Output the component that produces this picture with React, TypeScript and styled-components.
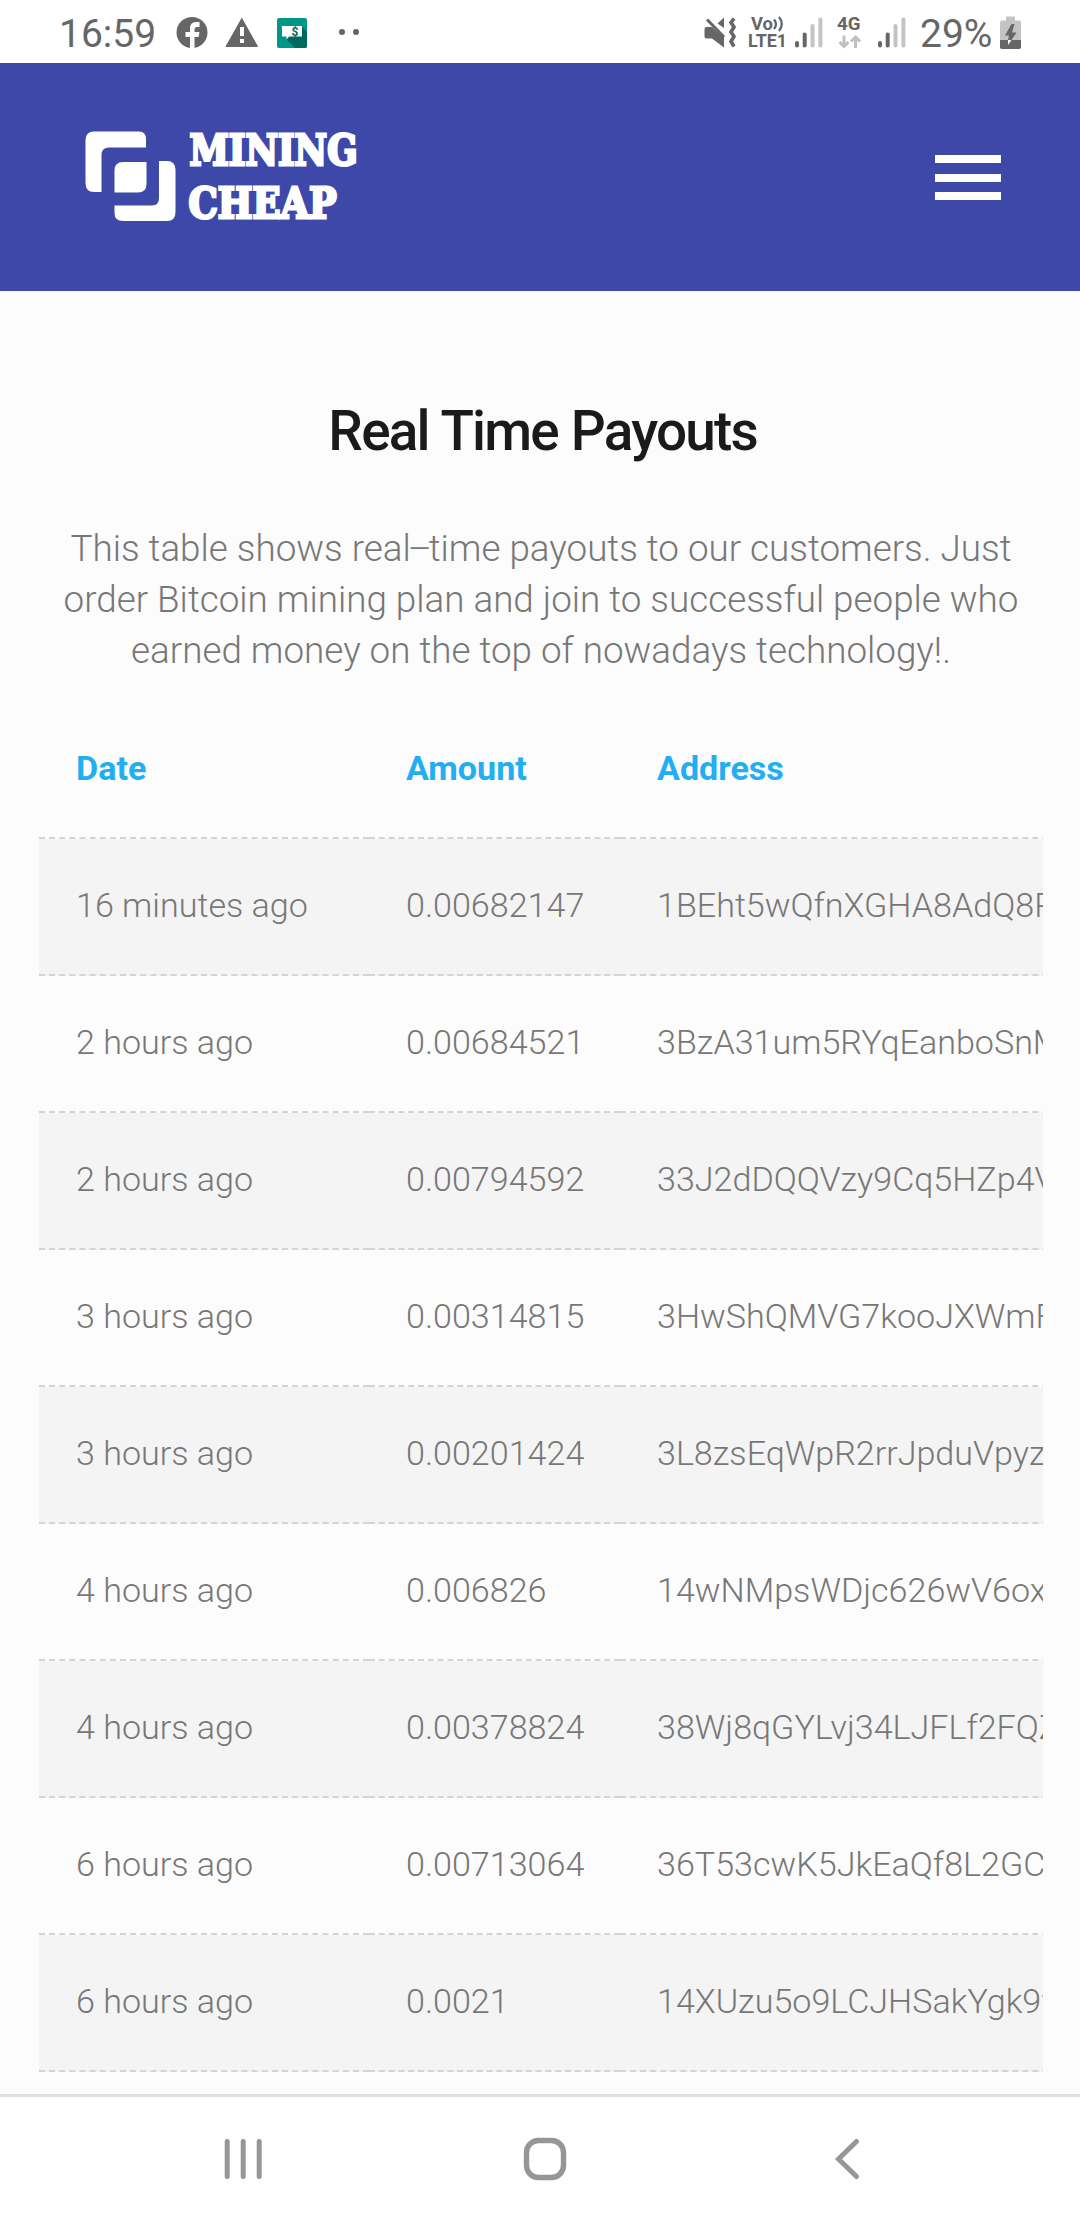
import React from "react";
import styled, { createGlobalStyle } from "styled-components";

const GlobalStyle = createGlobalStyle`
  * { box-sizing: border-box; }
  body { margin: 0; background: #fcfcfc; font-family: Roboto, "Liberation Sans", sans-serif; }
`;

const Screen = styled.div`
  width: 1080px;
  height: 2220px;
  display: flex;
  flex-direction: column;
  overflow: hidden;
  background: #fcfcfc;
`;

const StatusBar = styled.div`
  flex: none;
  height: 63px;
  padding: 0 59px 0 59px;
  display: flex;
  justify-content: space-between;
  align-items: flex-start;
  background: #fff;
  color: #666;
`;

const StatusGroup = styled.div`
  display: flex;
  align-items: flex-start;
  height: 63px;
`;

const Glyph = styled.svg<{ $gap?: number }>`
  display: block;
  flex: none;
  margin-left: ${(p) => p.$gap ?? 0}px;
`;

const StatusText = styled.span<{ $width: number; $gap?: number }>`
  flex: none;
  width: ${(p) => p.$width}px;
  margin-left: ${(p) => p.$gap ?? 0}px;
  font-size: 39px;
  line-height: 69px;
  white-space: nowrap;
`;

const Header = styled.header`
  flex: none;
  height: 228px;
  padding: 0 79px 0 85px;
  display: flex;
  justify-content: space-between;
  align-items: center;
  background: #3d48a9;
`;

const MenuButton = styled.button`
  width: 66px;
  height: 45px;
  margin-top: 1px;
  padding: 0;
  border: 0;
  background: none;
  display: flex;
  flex-direction: column;
  justify-content: space-between;
`;

const MenuBar = styled.span`
  height: 8px;
  background: #fff;
`;

const Content = styled.main`
  flex: 1;
  min-height: 0;
  overflow: hidden;
  padding: 98px 37px 0 39px;
`;

const Title = styled.h1`
  margin: 0;
  height: 84px;
  padding-left: 3px;
  font-size: 56px;
  font-weight: 500;
  line-height: 84px;
  letter-spacing: -1.8px;
  word-spacing: 1px;
  text-align: center;
  color: #1a1a1c;
  white-space: nowrap;
`;

const TitleText = styled.span`
  display: inline-block;
  transform: scaleX(0.98);
`;

const Intro = styled.p`
  margin: 50px 0 0;
  font-size: 36.8px;
  font-weight: 300;
  line-height: 51px;
  text-align: center;
  color: #777;
  white-space: nowrap;
`;

const Dash = styled.span`
  margin: 0 -3px;
`;

const TableWrap = styled.div`
  margin-top: 26px;
  overflow: hidden;
`;

const Row = styled.div<{ $shade?: boolean }>`
  width: 1100px;
  display: grid;
  grid-template-columns: 330px 251px 519px;
  background: ${(p) => (p.$shade ? "#f4f4f4" : "transparent")};
`;

const Cell = styled.div<{ $head?: boolean }>`
  height: 137px;
  padding-left: 37px;
  border-bottom: 2px dashed #d4d4d4;
  font-size: 34.1px;
  line-height: 132px;
  font-weight: ${(p) => (p.$head ? 700 : 300)};
  color: ${(p) => (p.$head ? "#22aef3" : "#777")};
  white-space: nowrap;
`;

const NavBar = styled.nav`
  flex: none;
  height: 126px;
  border-top: 3px solid #dfdfdf;
  padding: 0 218px 0 222px;
  display: flex;
  justify-content: space-between;
  align-items: center;
  background: #fff;
`;

const rows: [string, string, string][] = [
  ["16 minutes ago", "0.00682147", "1BEht5wQfnXGHA8AdQ8P"],
  ["2 hours ago", "0.00684521", "3BzA31um5RYqEanboSnM"],
  ["2 hours ago", "0.00794592", "33J2dDQQVzy9Cq5HZp4V"],
  ["3 hours ago", "0.00314815", "3HwShQMVG7kooJXWmF"],
  ["3 hours ago", "0.00201424", "3L8zsEqWpR2rrJpduVpyz"],
  ["4 hours ago", "0.006826", "14wNMpsWDjc626wV6ox"],
  ["4 hours ago", "0.00378824", "38Wj8qGYLvj34LJFLf2FQZ"],
  ["6 hours ago", "0.00713064", "36T53cwK5JkEaQf8L2GC"],
  ["6 hours ago", "0.0021", "14XUzu5o9LCJHSakYgk9f"],
];

const Signal = ({ gap }: { gap: number }) => (
  <Glyph $gap={gap} width="28" height="63" viewBox="0 0 28 63">
    <rect x="0" y="41" width="4" height="6.5" rx="2" fill="#666" />
    <rect x="7.7" y="32.5" width="4" height="15" rx="2" fill="#666" />
    <rect x="15.5" y="24" width="4" height="23.5" rx="2" fill="#c3c3c3" />
    <rect x="23.4" y="17.5" width="4" height="30" rx="2" fill="#c3c3c3" />
  </Glyph>
);

const Logo = () => (
  <svg width="280" height="100" viewBox="85 127 280 100" fill="#fff">
    <path d="M94 131.500H139Q146 131.500 146 139V147.500H109Q101.500 147.500 101.500 155V192H94Q85.500 192 85.500 183V140Q85.500 131.500 94 131.500Z" />
    <path d="M159 161H167Q175.500 161 175.500 170V212Q175.500 221 167 221H123Q114.500 221 114.500 213V205.500H152Q159 205.500 159 198Z" />
    <path d="M123 162H146.500V184Q146.500 192.500 138 192.500H114.500V170.500Q114.500 162 123 162Z" />
    <g fontFamily="'DejaVu Serif', serif" fontWeight="700" fontSize="43.500" stroke="#fff" strokeWidth="3">
      <text x="189.500" y="164.800" textLength="168" lengthAdjust="spacingAndGlyphs">MINING</text>
      <text x="188.500" y="218.300" textLength="148" lengthAdjust="spacingAndGlyphs">CHEAP</text>
    </g>
  </svg>
);

export default function App() {
  return (
    <Screen>
      <GlobalStyle />
      <StatusBar>
        <StatusGroup>
          <StatusText $width={97}>16:59</StatusText>
          <Glyph $gap={20} width="32" height="63" viewBox="176 0 32 63">
            <circle cx="192" cy="32.500" r="15.500" fill="#666" />
            <path d="M190 48V37H185.500V32H190V28.500Q190 22 196 22H199.500V27H197Q194.500 27 194.500 29.500V32H199.500L198.500 37H194.500V48Z" fill="#fff" />
          </Glyph>
          <Glyph $gap={17} width="34" height="63" viewBox="225 0 34 63">
            <path d="M241.800 18.500L257.500 46.500H226Z" fill="#666" stroke="#666" strokeWidth="1" strokeLinejoin="round" />
            <path d="M240 27h4v9h-4zM240 39h4v4h-4z" fill="#fff" />
          </Glyph>
          <Glyph $gap={18} width="30" height="63" viewBox="277 0 30 63">
            <rect x="277" y="18" width="30" height="30" rx="2" fill="#009688" />
            <path d="M286.500 39.500L302 27L307 32V46Q307 48 305 48H295Z" fill="#00695f" />
            <path d="M282 26H302V36.500H289L286.500 39.500V36.500H282Z" fill="#fff" />
            <text x="291.500" y="35.800" fontSize="12" fontWeight="700" fill="#00695f">$</text>
          </Glyph>
          <Glyph $gap={31} width="24" height="63" viewBox="338 0 24 63" fill="#666">
            <circle cx="342" cy="32" r="3" />
            <circle cx="356" cy="32" r="3" />
          </Glyph>
        </StatusGroup>
        <StatusGroup>
          <Glyph width="33" height="63" viewBox="704 0 33 63" fill="#666">
            <path d="M704.500 29Q704.500 27 706.500 27H712L718 32.500L724 37.500V47.500L712 38.500H706.500Q704.500 38.500 704.500 36.500Z" />
            <path d="M724 17.500V28L717.500 23.500Z" />
            <path d="M707 19.500L724 37" stroke="#666" strokeWidth="3" />
            <path d="M734 18.500L731 22.500L734 27L731 32L734 36.500L731 41.500L734 46.500" fill="none" stroke="#666" strokeWidth="3.600" />
          </Glyph>
          <Glyph $gap={10} width="42" height="63" viewBox="747 0 42 63" fill="#666" fontWeight="700" fontSize="18">
            <text x="751" y="30" textLength="22" lengthAdjust="spacingAndGlyphs">Vo</text>
            <path d="M774 19.500Q778 24 774 29M779 17Q784.500 23.500 779 31" fill="none" stroke="#666" strokeWidth="2.300" />
            <text x="748" y="47" textLength="39" lengthAdjust="spacingAndGlyphs">LTE1</text>
          </Glyph>
          <Signal gap={6} />
          <Glyph $gap={13} width="27" height="63" viewBox="836 0 27 63">
            <text x="837" y="30" fontWeight="700" fontSize="18" fill="#666" textLength="23.500" lengthAdjust="spacingAndGlyphs">4G</text>
            <path d="M844 35.500V46.500M839.500 42L844 46.500L848.500 42M855.500 48V37M851 41.500L855.500 37L860 41.500" fill="none" stroke="#c0c0c0" strokeWidth="3" />
          </Glyph>
          <Signal gap={15} />
          <StatusText $gap={14} $width={76}>29%</StatusText>
          <Glyph $gap={4} width="21" height="63" viewBox="1000 0 21 63">
            <path d="M1006 16.500H1015V21H1006Z" fill="#c3c3c3" />
            <rect x="1000" y="20.500" width="21" height="28.500" rx="2" fill="#c3c3c3" />
            <path d="M1000 40H1021V47Q1021 49 1019 49H1002Q1000 49 1000 47Z" fill="#666" />
            <path d="M1011.500 24L1005 35.500H1009L1008 40H1011.500L1016.500 32.500H1012L1014.500 24Z" fill="#666" />
            <path d="M1008 40H1011.500L1008 45Z" fill="#fff" />
          </Glyph>
        </StatusGroup>
      </StatusBar>
      <Header>
        <Logo />
        <MenuButton aria-label="Menu">
          <MenuBar />
          <MenuBar />
          <MenuBar />
        </MenuButton>
      </Header>
      <Content>
        <Title><TitleText>Real Time Payouts</TitleText></Title>
        <Intro>
          This table shows real<Dash>–</Dash>time payouts to our customers. Just<br />
          order Bitcoin mining plan and join to successful people who<br />
          earned money on the top of nowadays technology!.
        </Intro>
        <TableWrap>
          <Row>
            <Cell $head>Date</Cell>
            <Cell $head>Amount</Cell>
            <Cell $head>Address</Cell>
          </Row>
          {rows.map((row, i) => (
            <Row key={i} $shade={i % 2 === 0}>
              {row.map((value) => (
                <Cell key={value}>{value}</Cell>
              ))}
            </Row>
          ))}
        </TableWrap>
      </Content>
      <NavBar>
        <svg width="44" height="44" viewBox="222 2137 44 44" stroke="#969696" strokeWidth="5" strokeLinecap="round">
          <path d="M227.200 2141.500V2176.500M243.200 2141.500V2176.500M259.200 2141.500V2176.500" />
        </svg>
        <svg width="44" height="44" viewBox="523 2137 44 44">
          <rect x="526.500" y="2140.500" width="37" height="37" rx="12" fill="none" stroke="#969696" strokeWidth="5.400" />
        </svg>
        <svg width="38" height="44" viewBox="824 2137 38 44">
          <path d="M856.500 2141.500L838.500 2159L856.500 2176.500" fill="none" stroke="#969696" strokeWidth="5" strokeLinecap="round" />
        </svg>
      </NavBar>
    </Screen>
  );
}
